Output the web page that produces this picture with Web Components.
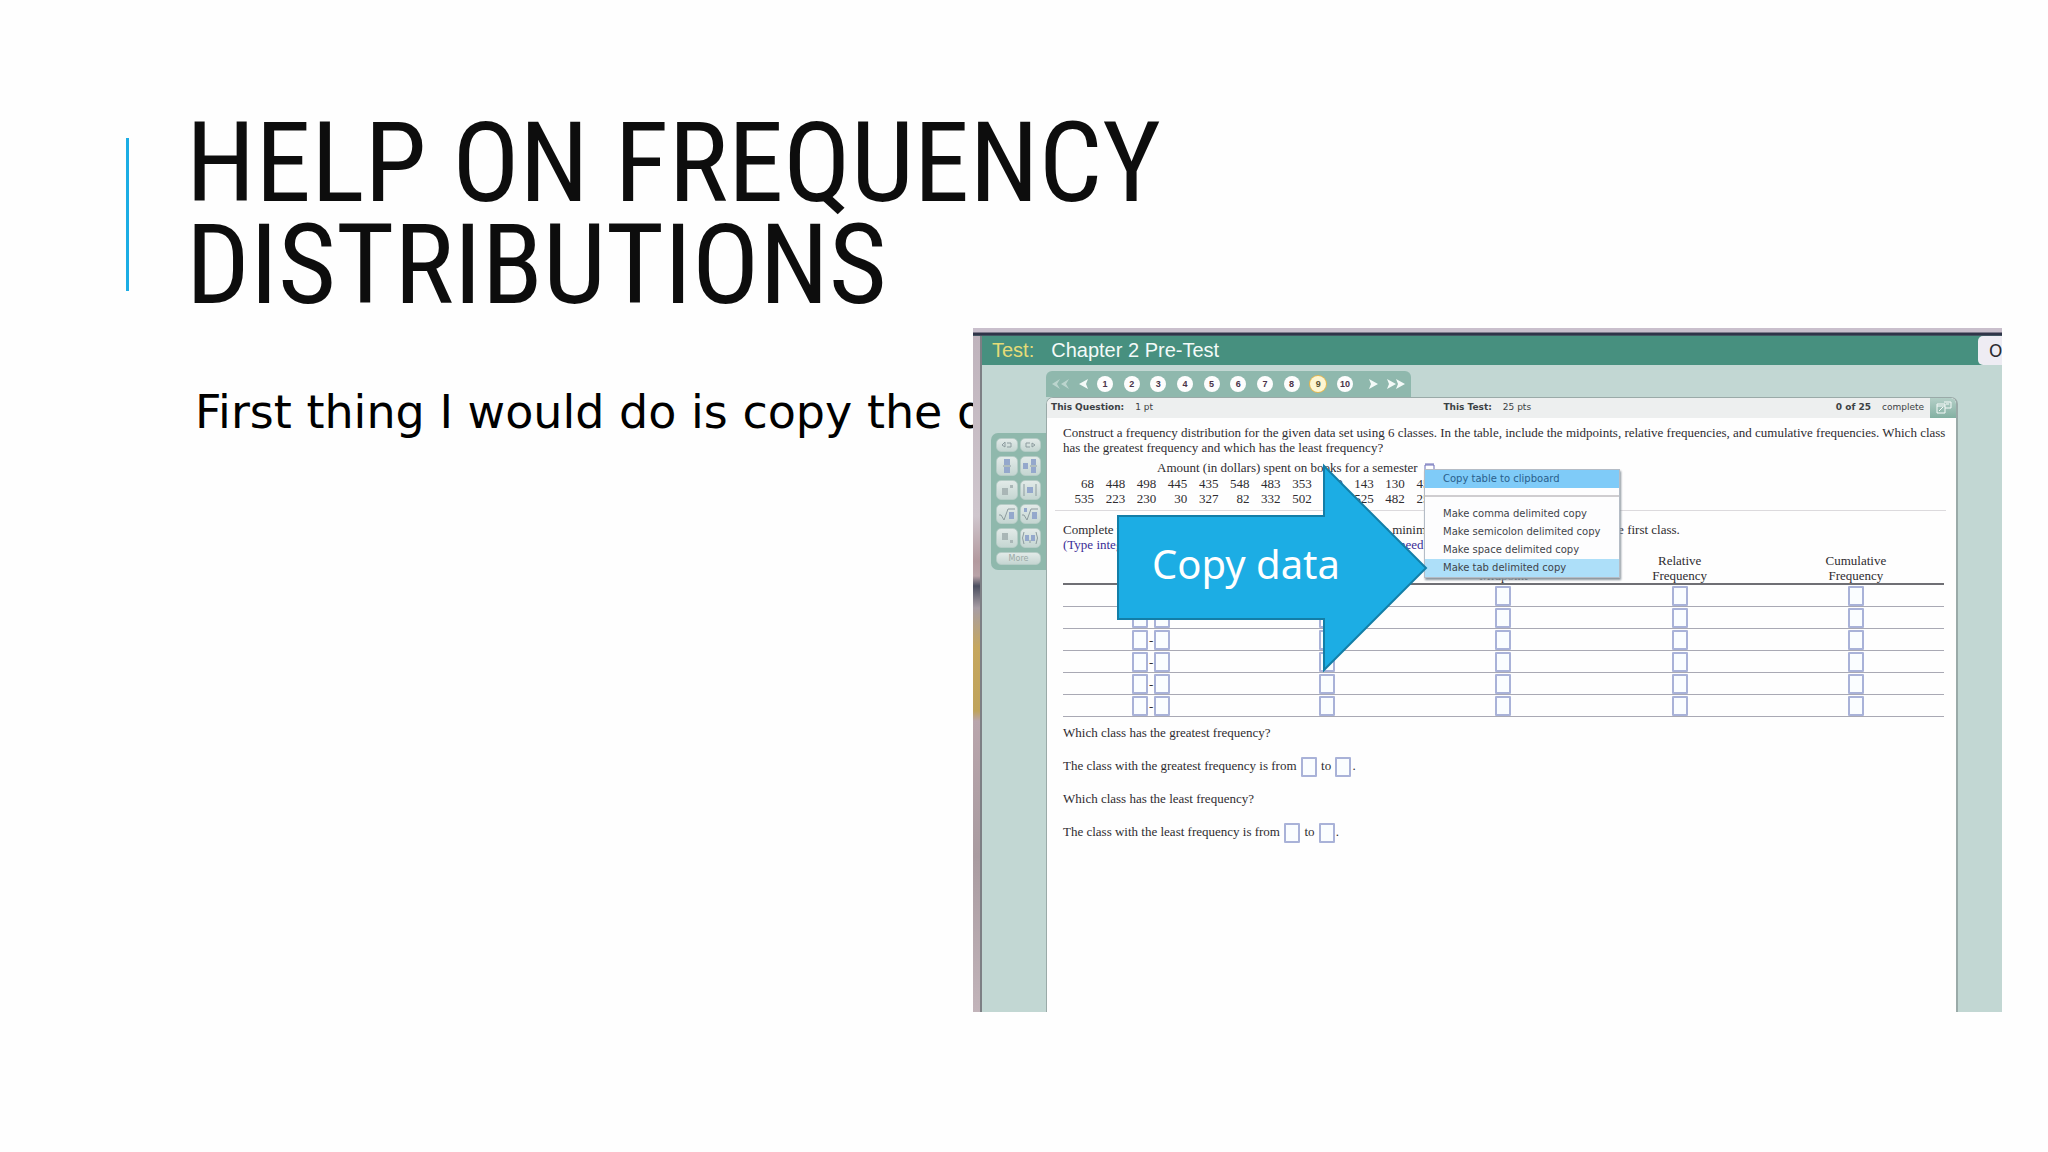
<!DOCTYPE html>
<html lang="en">
<head>
<meta charset="utf-8">
<title>Help on Frequency Distributions</title>
<style>
  body {
    margin: 0;
    background: #fefefe;
    font-family: "Noto Sans", sans-serif;
  }
</style>
</head>
<body>
<help-slide>
  <span slot="title">HELP ON FREQUENCY<br>DISTRIBUTIONS</span>
  <span slot="text">First thing I would do is copy the data</span>
  <test-window slot="picture"></test-window>
</help-slide>

<script>
// small helper, every element gets its template cloned in an open root
function define(name, html) {
  const template = document.createElement('template');
  template.innerHTML = html;
  customElements.define(name, class extends HTMLElement {
    constructor() {
      super();
      this.attachShadow({ mode: 'open' }).appendChild(template.content.cloneNode(true));
    }
  });
}

/* --- answer box --- */
class AnswerBox extends HTMLElement {
  constructor() {
    super();
    this.attachShadow({ mode: 'open' }).innerHTML = `
      <style>
        :host { display: inline-block; vertical-align: middle; }
        input {
          display: block;
          box-sizing: border-box;
          width: 16px;
          height: 20px;
          margin: 0;
          padding: 0;
          border: 2px solid #a9b2d8;
          border-radius: 1px;
          background: #fafdff;
          font: 12px "Liberation Serif", serif;
          outline: none;
        }
      </style>
      <input type="text">`;
  }
  connectedCallback() {
    this.shadowRoot.querySelector('input').setAttribute('aria-label', this.getAttribute('label') || 'Answer');
  }
}
customElements.define('answer-box', AnswerBox);

/* --- question navigation, 1 to 10 --- */
class QuestionNav extends HTMLElement {
  constructor() {
    super();
    let items = '';
    for (let i = 1; i <= 10; i++) {
      items += `<button class="num${i === 9 ? ' current' : ''}">${i}</button>`;
    }
    this.attachShadow({ mode: 'open' }).innerHTML = `
      <style>
        :host {
          display: flex;
          align-items: center;
          box-sizing: border-box;
          width: 365px;
          height: 26px;
          padding: 0 6px;
          border-radius: 6px 6px 0 0;
          background: #8fb8ad;
        }
        button { border: none; padding: 0; margin: 0; background: none; display: block; }
        svg { display: block; fill: #f4faf8; }
        .first { margin-right: 10px; opacity: .45; }
        .nums { display: flex; flex: 1; justify-content: space-between; margin: 0 16px 0 9px; }
        .num {
          width: 16px;
          height: 16px;
          border-radius: 8px;
          background: #fdfdfd;
          color: #4a3348;
          font: bold 9px/16px "Liberation Sans", sans-serif;
          text-align: center;
        }
        .current { background: #fdf6d2; box-shadow: 0 0 0 1px #e8b84e; color: #5a5330; }
        .next { margin-right: 9px; }
      </style>
      <button class="first" aria-label="First"><svg width="17" height="10"><path d="M8 0 0 5l8 5-3-5zM17 0 9 5l8 5-3-5z"/></svg></button>
      <button aria-label="Previous"><svg width="9" height="10"><path d="M9 0 0 5l9 5-2-5z"/></svg></button>
      <div class="nums">${items}</div>
      <button class="next" aria-label="Next"><svg width="9" height="10"><path d="M0 0l9 5-9 5 2-5z"/></svg></button>
      <button aria-label="Last"><svg width="18" height="10"><path d="M0 0l9 5-9 5 2-5zM9 0l9 5-9 5 2-5z"/></svg></button>`;
  }
}
customElements.define('question-nav', QuestionNav);

/* --- math palette on the left --- */
define('math-palette', `
  <style>
    :host {
      display: grid;
      grid-template-columns: 1fr 1fr;
      gap: 4px 2px;
      box-sizing: border-box;
      width: 55px;
      padding: 5px;
      border-radius: 7px 0 0 7px;
      background: #8fb8ac;
    }
    button {
      height: 20px;
      padding: 0;
      border: 1px solid #b5ccc6;
      border-radius: 5px;
      background: linear-gradient(#e2eae8, #c5d6d2);
      display: flex;
      align-items: center;
      justify-content: center;
    }
    .low { height: 14px; }
    .more { grid-column: 1 / 3; height: 13px; color: #9aa9a6; font: 8px "DejaVu Sans", sans-serif; }
    svg { display: block; fill: none; stroke: #8d9c9f; }
    .b { fill: #94a8cc; stroke: none; }
    .g { fill: #a9b6b6; stroke: none; }
  </style>
  <button class="low" aria-label="Undo"><svg width="14" height="8"><path d="M5 1 2 4l3 2zM7 6h4V2H7"/></svg></button>
  <button class="low" aria-label="Redo"><svg width="14" height="8"><path d="M9 2l3 2-3 2zM7 6H3V2h4"/></svg></button>
  <button aria-label="Fraction"><svg width="16" height="16"><path class="b" d="M5 1h6v6H5zM5 9h6v6H5z"/><path d="M4 8h8"/></svg></button>
  <button aria-label="Mixed number"><svg width="16" height="16"><path class="b" d="M1 5h5v6H1zM9 1h5v6H9zM9 9h5v6H9z"/><path d="M8 8h7"/></svg></button>
  <button aria-label="Exponent"><svg width="16" height="16"><path class="g" d="M3 6h6v7H3zM11 3h3v3h-3z"/></svg></button>
  <button aria-label="Absolute value"><svg width="16" height="16"><path class="b" d="M5 5h6v6H5z"/><path d="M2 2v12M14 2v12"/></svg></button>
  <button aria-label="Square root"><svg width="18" height="16"><path class="b" d="M11 6h5v7h-5z"/><path d="M1 9h2l3 5 4-11h7"/></svg></button>
  <button aria-label="Nth root"><svg width="18" height="16"><path class="b" d="M11 6h5v7h-5zM3 2h3v4H3z"/><path d="M1 9h2l3 5 4-11h7"/></svg></button>
  <button aria-label="Subscript"><svg width="16" height="16"><path class="g" d="M3 3h6v7H3zM11 10h3v3h-3z"/></svg></button>
  <button aria-label="Ordered pair"><svg width="18" height="16"><path class="b" d="M4 5h4v6H4zM10 5h4v6h-4z"/><path d="M3 2Q0 8 3 14M15 2q3 6 0 12M9 10v3"/></svg></button>
  <button class="more">More</button>
`);

/* --- popup menu for copying the table --- */
define('copy-menu', `
  <style>
    :host {
      display: flex;
      flex-direction: column;
      box-sizing: border-box;
      width: 196px;
      background: #fdfdfe;
      border: 1px solid #b4bcc6;
      box-shadow: 1px 2px 2px #8a949c;
    }
    button {
      height: 18px;
      padding: 0 18px;
      border: none;
      background: none;
      color: #3f444a;
      font: 10px/18px "DejaVu Sans", sans-serif;
      text-align: left;
      white-space: nowrap;
    }
    .copy { background: #7fcbf8; color: #2a5f8c; margin-bottom: 7px; }
    hr { width: 100%; box-sizing: border-box; margin: 0 0 8px; border: none; border-top: 2px solid #cfcdd0; }
    .tab { background: #addff9; }
  </style>
  <button class="copy">Copy table to clipboard</button>
  <hr>
  <button>Make comma delimited copy</button>
  <button>Make semicolon delimited copy</button>
  <button>Make space delimited copy</button>
  <button class="tab">Make tab delimited copy</button>
`);

/* --- blue block arrow with its label --- */
define('block-arrow', `
  <style>
    :host { display: grid; width: 311px; height: 210px; align-items: center; }
    svg, div { grid-area: 1 / 1; }
    svg { display: block; }
    div { padding: 0 0 8px 35px; color: #fff; font-size: 40px; line-height: 48px; white-space: nowrap; }
  </style>
  <svg width="311" height="210"><path d="M1 53h206V3l102 102-102 102v-51H1z" fill="#1cade4" stroke="#137ea7" stroke-width="2"/></svg>
  <div><slot></slot></div>
`);

/* --- the question sheet --- */
class QuestionSheet extends HTMLElement {
  constructor() {
    super();
    const data = [
      [68, 448, 498, 445, 435, 548, 483, 353, 320, 143, 130, 450],
      [535, 223, 230, 30, 327, 82, 332, 502, 315, 525, 482, 250]
    ];
    const dataRows = data.map(r => `<tr>${r.map(n => `<td>${n}</td>`).join('')}</tr>`).join('');
    let rows = '';
    for (let i = 1; i <= 6; i++) {
      rows += `<tr>
        <td><div class="range"><answer-box label="Lower limit ${i}"></answer-box><span>-</span><answer-box label="Upper limit ${i}"></answer-box></div></td>
        <td><answer-box label="Frequency ${i}"></answer-box></td>
        <td><answer-box label="Midpoint ${i}"></answer-box></td>
        <td><answer-box label="Relative frequency ${i}"></answer-box></td>
        <td><answer-box label="Cumulative frequency ${i}"></answer-box></td>
      </tr>`;
    }
    this.attachShadow({ mode: 'open' }).innerHTML = `
      <style>
        :host {
          display: block;
          border: 1px solid #9aaaa8;
          border-width: 1px 2px 0 1px;
          border-radius: 7px 7px 0 0;
          background: #fefefe;
          overflow: hidden;
          color: #2e2c30;
          font: 13px/15px "Liberation Serif", serif;
        }
        .head {
          display: flex;
          align-items: stretch;
          height: 20px;
          background: #edefef;
          color: #3c4144;
          font: 9px/19px "DejaVu Sans", sans-serif;
        }
        .info { flex: 1; display: grid; grid-template-columns: 1fr 1fr auto; padding: 0 6px 0 4px; }
        .info span { display: flex; gap: 11px; }
        .head button { width: 26px; border: none; padding: 0 0 0 4px; background: linear-gradient(#b4cfc7, #83b0a2); }
        .head svg { display: block; }
        .body { padding: 7px 12px 0 16px; }
        p { margin: 0; white-space: nowrap; }
        table { border-collapse: collapse; }
        .data { margin: 5px 0 4px; }
        .data caption { text-align: left; padding-left: 94px; height: 16px; white-space: nowrap; }
        .data caption svg { margin-left: 3px; }
        .data td { width: 31px; padding: 0; text-align: right; line-height: 15px; }
        hr { border: none; border-top: 1px solid #dcdadd; margin: 0 -2px 11px -8px; }
        .hint { display: grid; grid-template-columns: 310px 235px 1fr; }
        .hint.blue { grid-template-columns: 336px 1fr; color: #3a2c96; }
        .answers { width: 100%; table-layout: fixed; margin: 1px 0 6px; }
        .answers th { font-weight: normal; padding: 0; vertical-align: bottom; border-bottom: 2px solid #6f6f74; }
        .answers td { height: 20px; padding: 1px 0 0; text-align: center; border-bottom: 1px solid #a9a9b4; line-height: 0; }
        .range { display: flex; justify-content: center; align-items: center; line-height: 15px; }
        .range span { width: 6px; text-align: center; }
        .q { margin: 0 0 13px; line-height: 20px; }
        .q answer-box { margin: -2px 1px; }
      </style>
      <div class="head">
        <div class="info">
          <span><b>This Question:</b> 1 pt</span>
          <span><b>This Test:</b> 25 pts</span>
          <span><b>0 of 25</b> complete</span>
        </div>
        <button aria-label="Open in window"><svg width="20" height="18" fill="none" stroke="#f6faf9"><path d="M3 5h8v9H3zM3 7h8M10 3h7v6h-6M12 5h3M5 12l4-4"/></svg></button>
      </div>
      <div class="body">
        <p>Construct a frequency distribution for the given data set using 6 classes. In the table, include the midpoints, relative frequencies, and cumulative frequencies. Which class<br>has the greatest frequency and which has the least frequency?</p>
        <table class="data">
          <caption>Amount (in dollars) spent on books for a semester <svg width="12" height="9" fill="#fff" stroke="#6a6cb8"><path d="M1 2h9v5H1zM1 1h9"/></svg></caption>
          ${dataRows}
        </table>
        <hr>
        <p class="hint"><span>Complete the</span><span>the minimum</span><span>the first class.</span></p>
        <p class="hint blue"><span>(Type integers</span><span>need</span></p>
        <table class="answers">
          <thead><tr><th aria-label="Class"></th><th aria-label="Frequency"></th><th>Midpoint</th><th>Relative<br>Frequency</th><th>Cumulative<br>Frequency</th></tr></thead>
          <tbody>${rows}</tbody>
        </table>
        <p class="q">Which class has the greatest frequency?</p>
        <p class="q">The class with the greatest frequency is from <answer-box label="Greatest from"></answer-box> to <answer-box label="Greatest to"></answer-box>.</p>
        <p class="q">Which class has the least frequency?</p>
        <p class="q">The class with the least frequency is from <answer-box label="Least from"></answer-box> to <answer-box label="Least to"></answer-box>.</p>
      </div>`;
  }
}
customElements.define('question-sheet', QuestionSheet);

/* --- test window: bar, palette, sheet and what lies over them --- */
define('test-window', `
  <style>
    :host {
      display: grid;
      grid-template: auto 1fr / 9px minmax(0, 1fr);
      position: relative;
      min-height: 684px;
      overflow: hidden;
      background: #c2d7d3;
    }
    .top {
      grid-column: 1 / 3;
      height: 8px;
      background: linear-gradient(#c9bfcc 0 4px, #2f3448 5px 7px, #55757a 8px);
    }
    .edge {
      background: linear-gradient(#bfb3bc, #cfc6cd 180px, #b39a9f 225px, #b9a3a8 240px, #4c4f60 250px, #a79da4 272px, #c6a75e 312px, #bfa35c 375px, #b9a5ac 385px, #a99ba0 520px, #c2b4ba);
      border-right: 2px solid #7d7f84;
    }
    header {
      display: flex;
      align-items: center;
      gap: 17px;
      height: 29px;
      padding-left: 10px;
      background: #47907f;
      color: #f3faf8;
      font: 20px "Liberation Sans", sans-serif;
    }
    header b { color: #e6dc77; font-weight: normal; }
    header button {
      align-self: stretch;
      width: 24px;
      margin-left: auto;
      padding: 0 0 0 11px;
      border: none;
      border-radius: 5px 0 0 5px;
      background: #eeecf3;
      color: #2b2b30;
      font: 17px "DejaVu Sans", sans-serif;
      text-align: left;
      overflow: hidden;
    }
    .main { display: flex; align-items: stretch; height: calc(100% - 29px); }
    .side { flex: none; width: 64px; padding-top: 68px; display: flex; justify-content: flex-end; align-items: flex-start; }
    .center { flex: 1; min-width: 0; display: flex; flex-direction: column; margin-right: 44px; padding-top: 6px; }
    question-sheet { flex: 1; }
    copy-menu { position: absolute; left: 451px; top: 141px; }
    block-arrow { position: absolute; left: 144px; top: 135px; }
  </style>
  <div class="top"></div>
  <div class="edge"></div>
  <div>
    <header><b>Test:</b><span>Chapter 2 Pre-Test</span><button>O</button></header>
    <div class="main">
      <div class="side"><math-palette></math-palette></div>
      <div class="center">
        <question-nav></question-nav>
        <question-sheet></question-sheet>
      </div>
    </div>
  </div>
  <copy-menu></copy-menu>
  <block-arrow>Copy data</block-arrow>
`);

/* --- slide --- */
define('help-slide', `
  <style>
    :host { display: block; padding: 112px 46px 140px 126px; }
    header { display: flex; align-items: center; gap: 57px; margin-bottom: 12px; }
    .bar { width: 3px; height: 153px; background: #1cade4; }
    h1 {
      margin: 0;
      color: #0d0d0d;
      font: normal 112px/102px "Roboto Condensed", "Arial Narrow", sans-serif;
    }
    .row { display: flex; align-items: flex-start; }
    .text {
      flex: 1;
      min-width: 0;
      margin: 0;
      padding: 52px 0 0 69px;
      overflow: hidden;
      white-space: nowrap;
      color: #000;
      font: 46px/64px "DejaVu Sans", sans-serif;
    }
    .picture { flex: none; width: 55%; min-width: 0; max-width: 1029px; }
  </style>
  <header><div class="bar"></div><h1><slot name="title"></slot></h1></header>
  <div class="row">
    <p class="text"><slot name="text"></slot></p>
    <div class="picture"><slot name="picture"></slot></div>
  </div>
`);
</script>
</body>
</html>
